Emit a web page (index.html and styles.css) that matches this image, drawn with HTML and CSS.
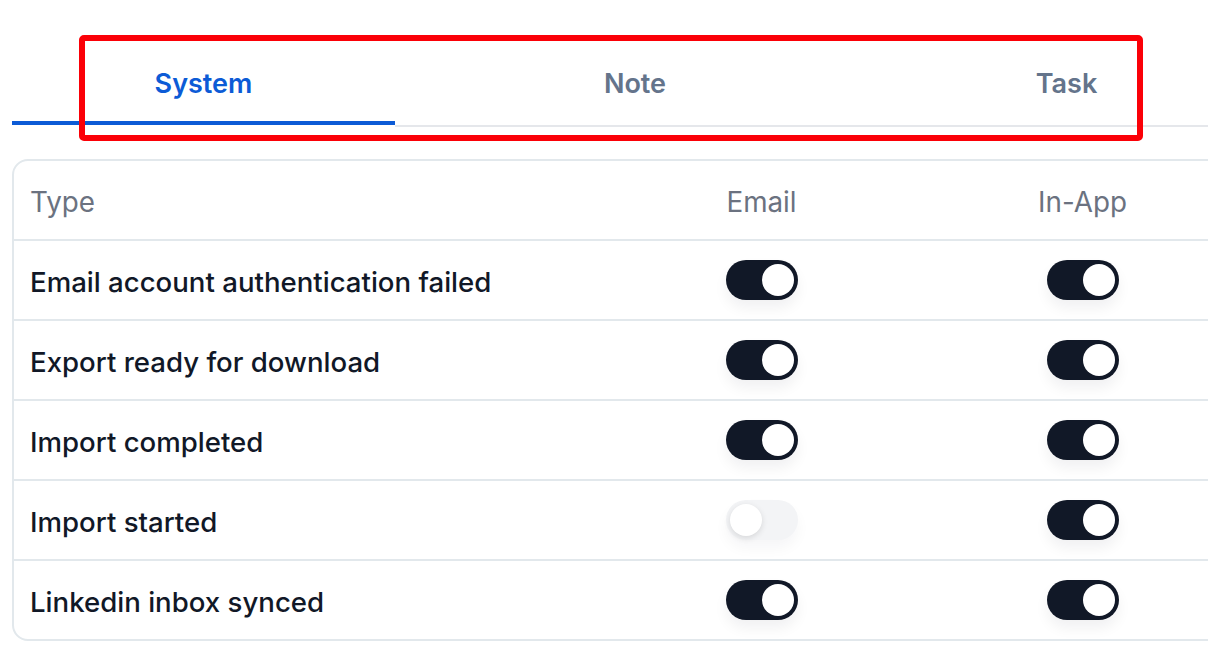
FILE: index.html
```html
<!DOCTYPE html>
<html lang="en">
<head>
<meta charset="utf-8">
<title>Notification settings</title>
<link rel="stylesheet" href="styles.css">
</head>
<body>
<div class="page">
  <nav class="tabs">
    <div class="tab active">System</div>
    <div class="tab tab-mid">Note</div>
    <div class="tab">Task</div>
  </nav>
  <div class="highlight"></div>

  <div class="card">
    <div class="row head">
      <div class="cell type">Type</div>
      <div class="cell center">Email</div>
      <div class="cell center">In-App</div>
    </div>
    <div class="row">
      <div class="cell type">Email account authentication failed</div>
      <div class="cell center"><span class="toggle on"><span class="knob"></span></span></div>
      <div class="cell center"><span class="toggle on"><span class="knob"></span></span></div>
    </div>
    <div class="row">
      <div class="cell type">Export ready for download</div>
      <div class="cell center"><span class="toggle on"><span class="knob"></span></span></div>
      <div class="cell center"><span class="toggle on"><span class="knob"></span></span></div>
    </div>
    <div class="row">
      <div class="cell type">Import completed</div>
      <div class="cell center"><span class="toggle on"><span class="knob"></span></span></div>
      <div class="cell center"><span class="toggle on"><span class="knob"></span></span></div>
    </div>
    <div class="row">
      <div class="cell type">Import started</div>
      <div class="cell center"><span class="toggle off"><span class="knob"></span></span></div>
      <div class="cell center"><span class="toggle on"><span class="knob"></span></span></div>
    </div>
    <div class="row">
      <div class="cell type">Linkedin inbox synced</div>
      <div class="cell center"><span class="toggle on"><span class="knob"></span></span></div>
      <div class="cell center"><span class="toggle on"><span class="knob"></span></span></div>
    </div>
  </div>
</div>
</body>
</html>
```

FILE: styles.css
```css
* { box-sizing: border-box; }
html, body {
  margin: 0;
  padding: 0;
  background: #ffffff;
  overflow: hidden;
}
body {
  font-family: Inter, "Noto Sans", "Liberation Sans", sans-serif;
  width: 1208px;
  height: 666px;
}
.page {
  position: relative;
  padding-left: 12px;
  width: 1208px;
  height: 666px;
  overflow: hidden;
}
.tabs {
  display: grid;
  grid-template-columns: 383px 480px 383px;
  align-items: end;
  padding-top: 44px;
}
.tab {
  font-size: 27px;
  line-height: 32px;
  font-weight: 600;
  color: #64748b;
  text-align: center;
  padding: 24px 0 25px;
  border-bottom: 2px solid #e5e7eb;
}
.tab.active {
  color: #0c5bd6;
  padding-bottom: 21px;
  border-bottom: 4px solid #0c5bd6;
  margin-bottom: 2px;
}
.highlight {
  position: absolute;
  left: 79px;
  top: 35px;
  width: 1064px;
  height: 106px;
  border: 6px solid #fb0007;
  border-radius: 5px;
  pointer-events: none;
}
.card {
  margin-top: 32px;
  width: 1300px;
  border: 2px solid #e2e8ec;
  border-radius: 16px;
  overflow: hidden;
}
.row {
  display: grid;
  grid-template-columns: 587px 321px 321px;
  height: 80px;
  border-top: 2px solid #e2e8ec;
  align-items: center;
}
.row.head {
  height: 78px;
  border-top: none;
}
.cell {
  font-size: 27.6px;
  line-height: 32px;
  font-weight: 500;
  color: #111827;
}
.cell.type {
  padding-left: 16px;
  padding-top: 3px;
}
.head .cell {
  font-size: 27.8px;
  font-weight: 400;
  color: #6b7280;
  padding-top: 4px;
}
.center {
  display: flex;
  justify-content: center;
}
.toggle {
  position: relative;
  display: block;
  width: 72px;
  height: 40px;
  border-radius: 20px;
  background: #111827;
  box-shadow: 0 8px 14px rgba(17, 24, 39, 0.06);
}
.knob {
  position: absolute;
  top: 4px;
  right: 4px;
  width: 32px;
  height: 32px;
  border-radius: 50%;
  background: #ffffff;
}
.toggle.off {
  background: #f3f4f6;
  box-shadow: 0 8px 14px rgba(17, 24, 39, 0.04);
}
.toggle.off .knob {
  right: auto;
  left: 4px;
  box-shadow: 0 2px 6px rgba(0, 0, 0, 0.12);
}
```
